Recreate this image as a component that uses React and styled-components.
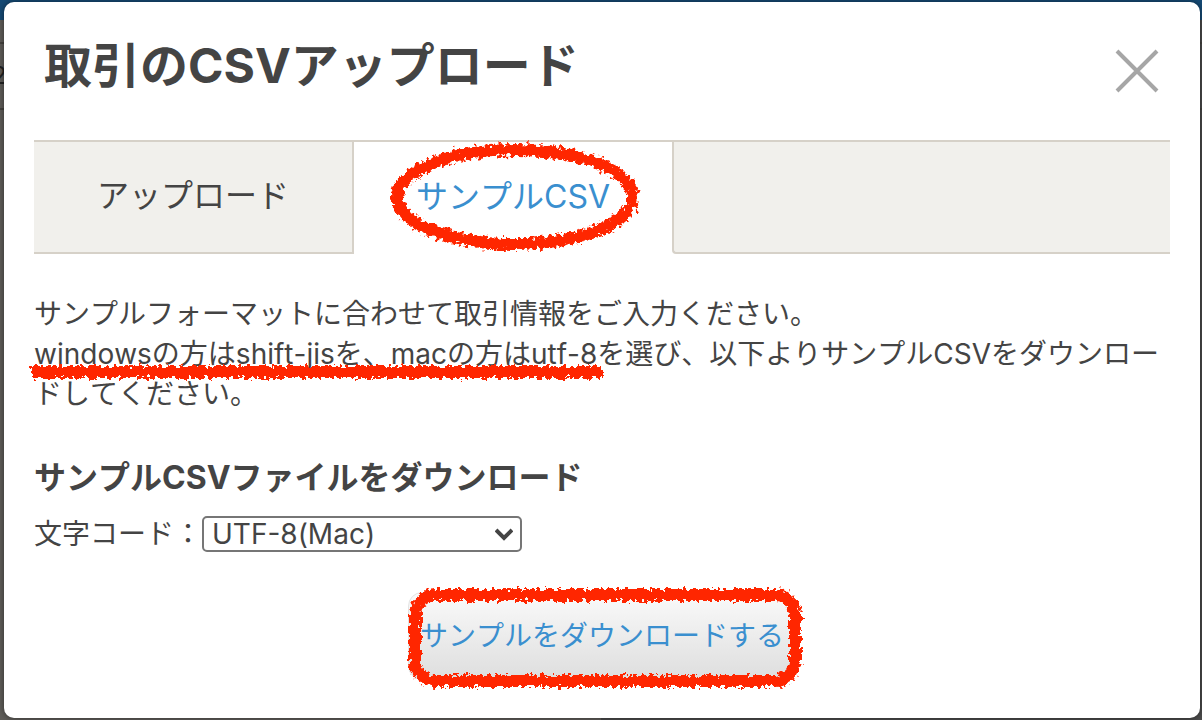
import React from "react";
import styled, { createGlobalStyle } from "styled-components";

const INK = "#444444";
const BLUE = "#3a8fcf";
const LINE = "#d6d1c8";
const PANEL = "#f1f0ec";
const MARK = "#ff2600";

const GlobalStyle = createGlobalStyle`
  * { box-sizing: border-box; }
  body {
    margin: 0;
    color: ${INK};
    font-family: Inter, "Noto Sans CJK JP", sans-serif;
    font-size: 28px;
    line-height: 40px;
    font-kerning: none;
  }
  button, select { font: inherit; color: inherit; font-kerning: none; }
`;

const Screen = styled.div`
  position: relative;
  display: flex;
  min-height: 100vh;
  padding: 2px 2px 2px 4px;
  background: #4b4b4b;
`;

const Behind = styled.div`
  position: absolute;
  inset: 0;
  overflow: hidden;
  background: linear-gradient(to right, #5f5d59 50%, #4b4b4b 50%);
`;

const BehindBar = styled.div`
  height: 20px;
  background: #154a75;
`;

const BehindRow = styled.div`
  display: flex;
  align-items: center;
  height: 68px;
  margin-top: 22px;
  border-top: 2px solid #45433f;
  border-bottom: 2px solid #45433f;
  color: #222222;
  font-size: 24px;
  text-indent: -8px;
`;

const Dialog = styled.div`
  position: relative;
  flex: 1;
  min-width: 0;
  padding: 0 30px 30px;
  border-radius: 10px;
  background: #ffffff;
  box-shadow: 0 0 6px rgba(0, 0, 0, 0.5);
`;

const Header = styled.header`
  display: flex;
  align-items: center;
  justify-content: space-between;
  height: 138px;
  padding: 0 10px;
`;

const Title = styled.h1`
  margin: 0;
  padding-bottom: 10px;
  font-size: 48px;
  line-height: 72px;
  font-weight: 700;
`;

const CloseButton = styled.button`
  display: flex;
  padding: 0;
  border: 0;
  background: none;
  cursor: pointer;
`;

const Tabs = styled.div`
  display: flex;
  height: 114px;
  border-top: 2px solid ${LINE};
`;

const Tab = styled.button`
  position: relative;
  width: ${(p) => (p.$active ? "318px" : "320px")};
  padding: 0 0 2px;
  border: 0 solid ${LINE};
  border-width: ${(p) => (p.$active ? "0" : "0 2px 2px 0")};
  background: ${(p) => (p.$active ? "#ffffff" : PANEL)};
  color: ${(p) => (p.$active ? BLUE : INK)};
  font-size: 32px;
  cursor: pointer;
`;

const TabRest = styled.div`
  flex: 1;
  border: 0 solid ${LINE};
  border-width: 0 0 2px 2px;
  border-bottom-left-radius: 4px;
  background: ${PANEL};
`;

const Lead = styled.p`
  margin: 40px 0;
`;

const Marked = styled.span`
  position: relative;
`;

const Subtitle = styled.h2`
  margin: 0 0 14px;
  font-size: 32px;
  line-height: 48px;
  font-weight: 700;
`;

const Field = styled.div`
  display: flex;
  align-items: center;
  height: 36px;
`;

const SelectWrap = styled.div`
  position: relative;
  width: 320px;
`;

const Select = styled.select`
  display: block;
  width: 100%;
  height: 36px;
  padding: 0 40px 0 8px;
  border: 2px solid #767676;
  border-radius: 5px;
  background: #ffffff;
  line-height: 32px;
  appearance: none;
`;

const Chevron = styled.svg`
  position: absolute;
  right: 9px;
  top: 11px;
  pointer-events: none;
`;

const Actions = styled.div`
  display: flex;
  justify-content: center;
  margin-top: 40px;
`;

const DownloadButton = styled.button`
  position: relative;
  height: 88px;
  padding: 0 11px;
  border: 1px solid #e4e4e4;
  border-radius: 14px;
  background: linear-gradient(#fafafa, #dedede);
  color: ${BLUE};
  white-space: nowrap;
  cursor: pointer;
`;

const Mark = styled.svg`
  position: absolute;
  left: ${(p) => p.$left}px;
  top: ${(p) => p.$top}px;
  overflow: visible;
  pointer-events: none;
  fill: none;
  stroke: ${MARK};
`;

function Crayon() {
  return (
    <svg width="0" height="0" style={{ position: "absolute" }} aria-hidden="true">
      <filter id="crayon" filterUnits="userSpaceOnUse" x="-20" y="-20" width="640" height="160">
        <feTurbulence type="fractalNoise" baseFrequency="0.24" numOctaves="3" seed="4" result="noise" />
        <feDisplacementMap in="SourceGraphic" in2="noise" scale="11" xChannelSelector="R" yChannelSelector="G" />
      </filter>
    </svg>
  );
}

export default function App() {
  return (
    <Screen lang="ja">
      <GlobalStyle />
      <Crayon />
      <Behind aria-hidden="true">
        <BehindBar />
        <BehindRow>2</BehindRow>
      </Behind>
      <Dialog role="dialog" aria-labelledby="dialog-title">
        <Header>
          <Title id="dialog-title">取引のCSVアップロード</Title>
          <CloseButton type="button" aria-label="閉じる">
            <svg width="46" height="46" viewBox="0 0 46 46" stroke="#a6a6a6" strokeWidth="4">
              <path d="M3 3 L43 43 M43 3 L3 43" />
            </svg>
          </CloseButton>
        </Header>

        <Tabs role="tablist">
          <Tab type="button" role="tab" aria-selected="false">アップロード</Tab>
          <Tab type="button" role="tab" aria-selected="true" $active>
            サンプルCSV
            <Mark $left={36} $top={2} width="249" height="107" aria-hidden="true">
              <ellipse cx="125" cy="53" rx="118" ry="47" strokeWidth="12" filter="url(#crayon)" />
            </Mark>
          </Tab>
          <TabRest />
        </Tabs>

        <Lead>
          サンプルフォーマットに合わせて取引情報をご入力ください。
          <br />
          <Marked>
            windowsの方はshift-jisを、macの方はutf-8
            <Mark $left={-4} $top={28} width="574" height="14" aria-hidden="true">
              <path d="M1 7 L572 7" strokeWidth="12" filter="url(#crayon)" />
            </Mark>
          </Marked>
          を選び、以下よりサンプルCSVをダウンロードしてください。
        </Lead>

        <Subtitle>サンプルCSVファイルをダウンロード</Subtitle>
        <Field>
          <label htmlFor="charset">文字コード：</label>
          <SelectWrap>
            <Select id="charset" defaultValue="utf8">
              <option value="utf8">UTF-8(Mac)</option>
              <option value="sjis">Shift-JIS(Windows)</option>
            </Select>
            <Chevron width="18" height="14" viewBox="0 0 18 14" fill="none" stroke={INK} strokeWidth="4" aria-hidden="true">
              <path d="M1 3 L9 11 L17 3" />
            </Chevron>
          </SelectWrap>
        </Field>

        <Actions>
          <DownloadButton type="button">
            サンプルをダウンロードする
            <Mark $left={-1} $top={-5} width="393" height="99" aria-hidden="true">
              <rect x="7" y="7" width="380" height="86" rx="20" strokeWidth="12" filter="url(#crayon)" />
            </Mark>
          </DownloadButton>
        </Actions>
      </Dialog>
    </Screen>
  );
}
